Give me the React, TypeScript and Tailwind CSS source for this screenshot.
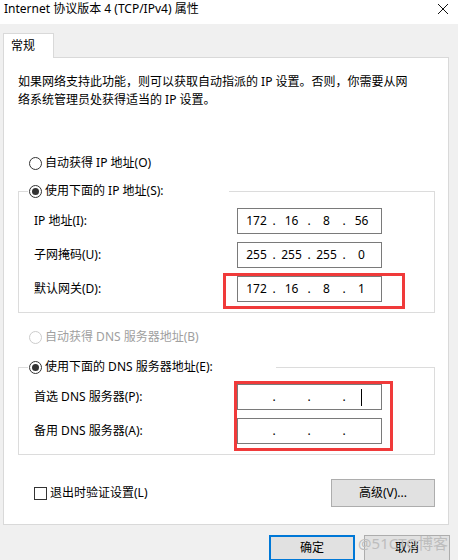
import type { ReactNode } from 'react';

type RadioProps = { checked?: boolean; disabled?: boolean };

function Radio({ checked, disabled }: RadioProps) {
  return (
    <span
      className={`flex h-[13px] w-[13px] shrink-0 items-center justify-center rounded-full border bg-white ${
        disabled ? 'border-[#cccccc]' : 'border-[#333333]'
      }`}
    >
      {checked && <span className="h-[7px] w-[7px] rounded-full bg-[#333333]" />}
    </span>
  );
}

function RadioRow({ label, checked, disabled }: { label: string } & RadioProps) {
  return (
    <div className={`flex h-[18px] items-center gap-[3px] ${disabled ? 'text-[#a0a0a0]' : 'text-black'}`}>
      <Radio checked={checked} disabled={disabled} />
      <span className="whitespace-nowrap">{label}</span>
    </div>
  );
}

function IpBox({ parts, caret }: { parts: string[]; caret?: boolean }) {
  return (
    <div className="flex h-[26px] w-[145px] items-center border border-[#7a7a7a] bg-white pl-[4px] leading-[18px]">
      {parts.map((p, i) => (
        <div key={i} className="flex items-center">
          <span className="flex w-[29px] justify-center">
            {caret && i === 3 ? <span className="h-[17px] w-px bg-black" /> : p}
          </span>
          {i < 3 && <span className="w-[6px] text-center">.</span>}
        </div>
      ))}
    </div>
  );
}

function FieldRow({ label, children }: { label: string; children: ReactNode }) {
  return (
    <div className="flex h-[26px] items-center">
      <span className="w-[203px] whitespace-nowrap">{label}</span>
      {children}
    </div>
  );
}

function GroupBox({ legend, width, children }: { legend: string; width: string; children: ReactNode }) {
  return (
    <fieldset className="ml-[14px] w-[417px] border border-[#dcdcdc]">
      <legend className={`ml-[9px] ${width}`}>
        <div className="ml-px">
          <RadioRow label={legend} checked />
        </div>
      </legend>
      <div className="flex flex-col gap-[8px] pb-[10px] pl-[15px] pt-[8px]">{children}</div>
    </fieldset>
  );
}

// red annotation frame drawn over the screenshot
function Mark({ className }: { className: string }) {
  return <div className={`pointer-events-none absolute border-[3px] border-[#f03a3a] ${className}`} />;
}

export default function App() {
  return (
    <div className="h-[560px] w-[458px] overflow-hidden bg-[#f0f0f0] font-['Noto_Sans','Noto_Sans_CJK_SC',sans-serif] text-[12px] leading-[18px] text-black">
      {/* title bar */}
      <div className="flex h-[24px] justify-between bg-white">
        <span className="pl-[4px] whitespace-nowrap">Internet 协议版本 4 (TCP/IPv4) 属性</span>
        <svg viewBox="0 0 10 10" className="mr-[10px] mt-[4px] h-[10px] w-[10px]" fill="none" stroke="#111" strokeWidth="1">
          <path d="M0 0l10 10M10 0L0 10" />
        </svg>
      </div>

      {/* tab strip */}
      <div className="pl-[3px] pt-[9px]">
        <div className="relative z-10 -mb-px flex h-[25px] w-[51px] items-center border border-b-0 border-[#d9d9d9] bg-white pl-[7px]">
          常规
        </div>
        <div className="flex h-[468px] w-[446px] flex-col border border-[#d9d9d9] bg-white">
          <p className="whitespace-nowrap pl-[14px] pt-[15px]">
            如果网络支持此功能，则可以获取自动指派的 IP 设置。否则，你需要从网
            <br />
            络系统管理员处获得适当的 IP 设置。
          </p>

          <div className="ml-[25px] mt-[45px]">
            <RadioRow label="自动获得 IP 地址(O)" />
          </div>

          <div className="mt-[10px]">
            <GroupBox legend="使用下面的 IP 地址(S):" width="w-[201px]">
              <FieldRow label="IP 地址(I):">
                <IpBox parts={['172', '16', '8', '56']} />
              </FieldRow>
              <FieldRow label="子网掩码(U):">
                <IpBox parts={['255', '255', '255', '0']} />
              </FieldRow>
              <FieldRow label="默认网关(D):">
                <div className="relative">
                  <IpBox parts={['172', '16', '8', '1']} />
                  <Mark className="-left-[14px] -top-[3px] h-[36px] w-[182px]" />
                </div>
              </FieldRow>
            </GroupBox>
          </div>

          <div className="ml-[25px] mt-[15px]">
            <RadioRow label="自动获得 DNS 服务器地址(B)" disabled />
          </div>

          <div className="mt-[12px]">
            <GroupBox legend="使用下面的 DNS 服务器地址(E):" width="w-[248px]">
              <FieldRow label="首选 DNS 服务器(P):">
                <div className="relative">
                  <IpBox parts={['', '', '', '']} caret />
                  <Mark className="-left-[3px] -top-[3px] h-[70px] w-[159px]" />
                </div>
              </FieldRow>
              <FieldRow label="备用 DNS 服务器(A):">
                <IpBox parts={['', '', '', '']} />
              </FieldRow>
            </GroupBox>
          </div>

          <div className="mt-[24px] flex items-center justify-between pl-[30px] pr-[13px]">
            <label className="flex items-center gap-[3px]">
              <span className="h-[13px] w-[13px] border border-[#333333] bg-white" />
              <span className="whitespace-nowrap">退出时验证设置(L)</span>
            </label>
            <button className="h-[28px] w-[104px] border border-[#adadad] bg-[#e1e1e1]">高级(V)...</button>
          </div>
        </div>
      </div>

      {/* dialog buttons */}
      <div className="relative mt-[10px] flex justify-end gap-[9px] pr-[8px]">
        <button className="h-[26px] w-[86px] border-2 border-[#0078d7] bg-[#e1e1e1]">确定</button>
        <button className="h-[26px] w-[86px] border border-[#adadad] bg-[#e1e1e1]">取消</button>
        <span className="pointer-events-none absolute right-[10px] top-[-1px] whitespace-nowrap text-[15px] leading-[18px] text-[#bdbdbd]">
          @51CTO博客
        </span>
      </div>
    </div>
  );
}
